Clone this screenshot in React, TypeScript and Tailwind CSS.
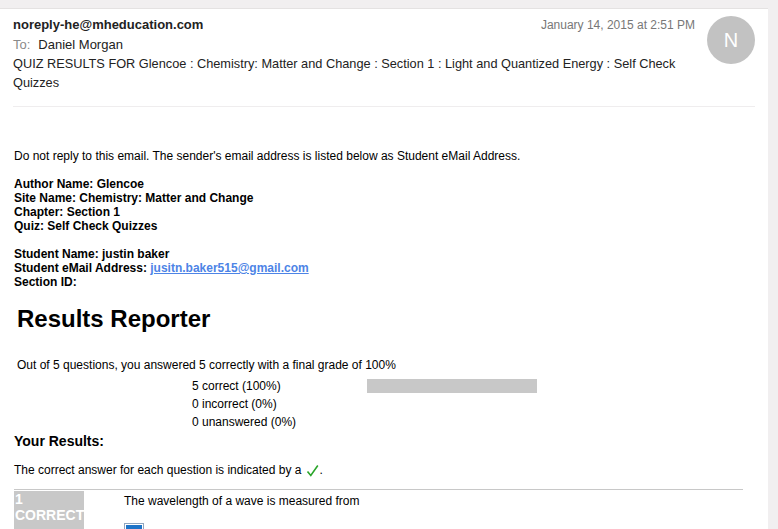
import React from 'react';

const font = { fontFamily: '"Liberation Sans", Arial, Helvetica, sans-serif' };

export default function App() {
  return (
    <div className="h-[529px] w-[778px] overflow-hidden bg-[#f1eff0]" style={font}>
      <div className="mt-[8px] h-[521px] w-[768px] overflow-hidden border-t border-[#e4e2e2] bg-white">
        {/* mail header */}
        <div className="mx-[13px] flex border-b border-[#efedee] pb-[14px] pt-[6px]">
          <div className="flex-1 text-[13px] leading-[19px] text-[#222]">
            <div className="flex items-baseline justify-between">
              <span className="font-bold">noreply-he@mheducation.com</span>
              <span className="text-[12px] text-[#777]">January 14, 2015 at 2:51 PM</span>
            </div>
            <div>
              <span className="text-[#8a8a8a]">To:</span>
              <span className="ml-[8px]">Daniel Morgan</span>
            </div>
            <div className="text-[12.75px]">
              QUIZ RESULTS FOR Glencoe : Chemistry: Matter and Change : Section 1 : Light and Quantized Energy : Self Check Quizzes
            </div>
          </div>
          <div className="ml-[12px] mt-[1px] flex h-[48px] w-[48px] shrink-0 items-center justify-center rounded-full bg-[#c2c2c2] text-[20px] text-white">
            N
          </div>
        </div>

        {/* body */}
        <div className="pl-[14px] pt-[42px] text-[12px] leading-[14px] text-black">
          <p>Do not reply to this email. The sender's email address is listed below as Student eMail Address.</p>
          <div className="mt-[14px] font-bold">
            <div>Author Name: Glencoe</div>
            <div>Site Name: Chemistry: Matter and Change</div>
            <div>Chapter: Section 1</div>
            <div>Quiz: Self Check Quizzes</div>
            <div className="mt-[14px]">Student Name: justin baker</div>
            <div>
              Student eMail Address: <a className="text-[#4d84e6] underline">jusitn.baker515@gmail.com</a>
            </div>
            <div>Section ID:</div>
          </div>

          <h1 className="ml-[3px] mt-[16px] text-[24px] font-bold leading-[28px]">Results Reporter</h1>

          <p className="ml-[3px] mt-[25px]">Out of 5 questions, you answered 5 correctly with a final grade of 100%</p>

          <div className="mt-[5px] flex">
            <div className="ml-[178px] w-[175px] leading-[18px]">
              <div>5 correct (100%)</div>
              <div>0 incorrect (0%)</div>
              <div>0 unanswered (0%)</div>
            </div>
            <div className="mt-[2px] h-[14px] w-[170px] bg-[#c8c8c8]" />
          </div>

          <h3 className="mt-[2px] text-[14px] font-bold leading-[16px]">Your Results:</h3>

          <p className="mt-[13px] flex items-center">
            The correct answer for each question is indicated by a
            <svg className="ml-[5px] mt-[2px]" width="13" height="13" viewBox="0 0 13 13">
              <path d="M1.5 7.5 L4.8 11.5 L11.8 1.5" fill="none" stroke="#2aa52a" strokeWidth="1.6" />
            </svg>
            <span>.</span>
          </p>

          <div className="mr-[25px] mt-[12px] flex border-t border-[#c8c8c8] pt-px">
            <div className="h-[40px] w-[70px] bg-[#c8c8c8] pl-px text-[14px] font-bold leading-[16px] text-white">
              1<br />CORRECT
            </div>
            <div className="ml-[40px] pt-[3px]">
              <div>The wavelength of a wave is measured from</div>
              <div className="mt-[15px] h-[10px] w-[20px] border border-[#8fa6c0] p-px">
                <div className="h-full w-full bg-[#1e74c8]" />
              </div>
            </div>
          </div>
        </div>
      </div>
    </div>
  );
}
